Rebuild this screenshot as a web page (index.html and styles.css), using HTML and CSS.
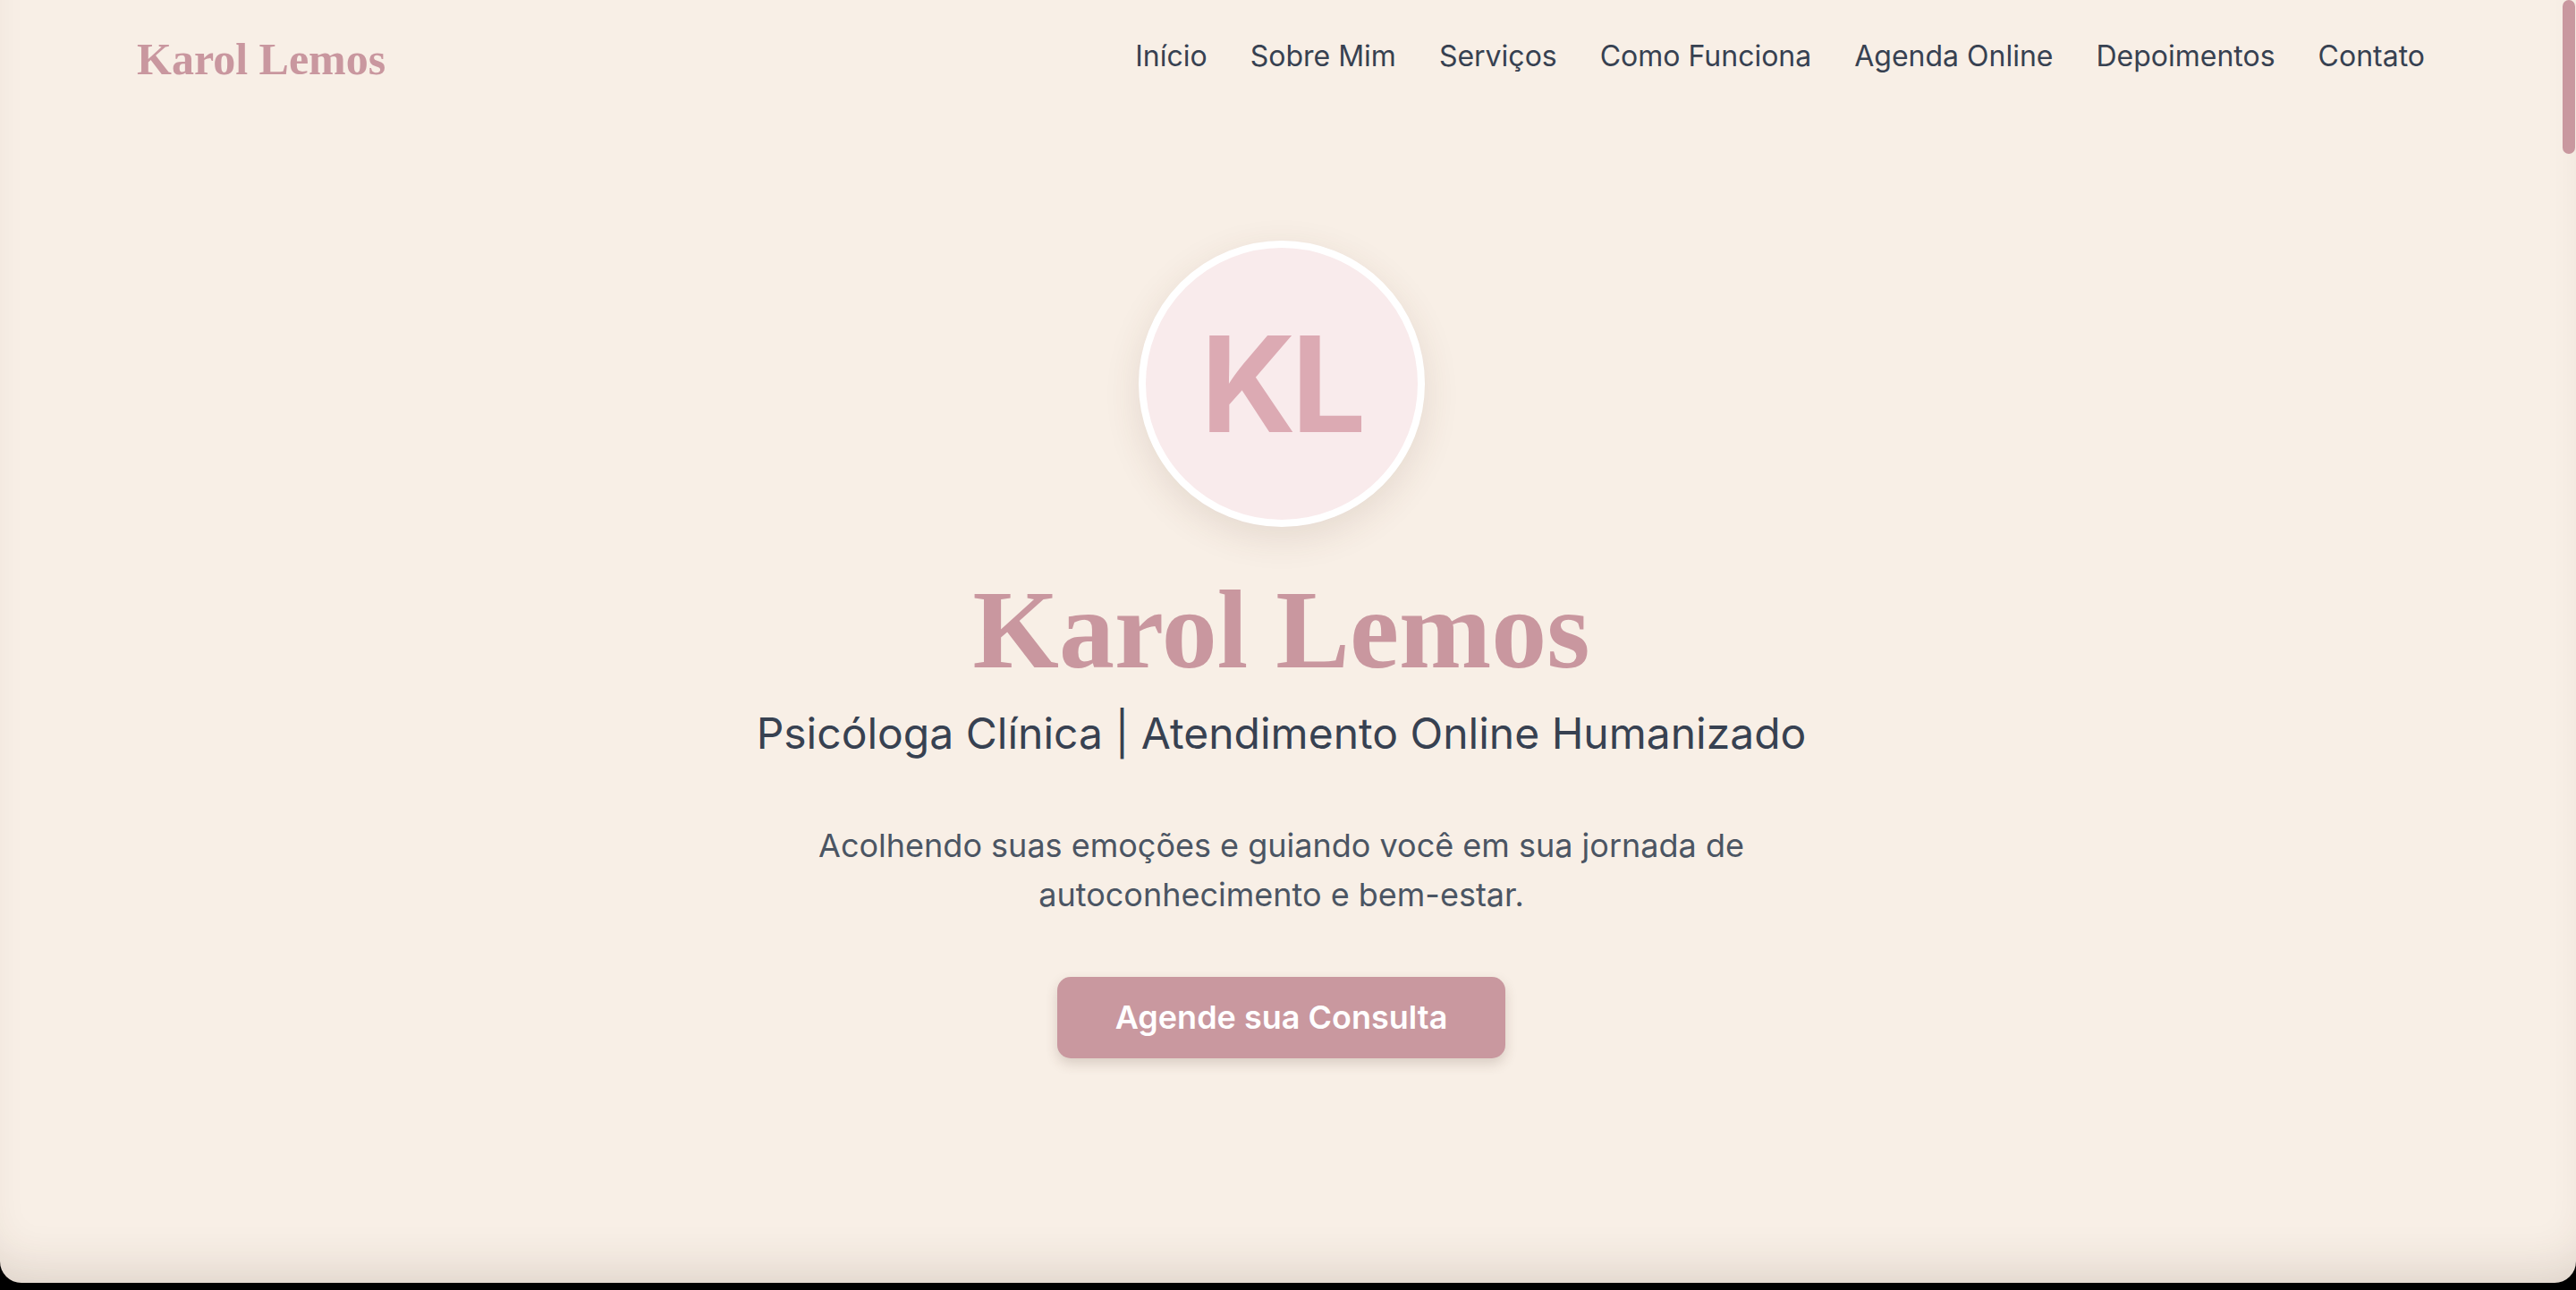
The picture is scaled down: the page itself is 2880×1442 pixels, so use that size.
FILE: index.html
```html
<!DOCTYPE html>
<html lang="pt-BR">
<head>
<meta charset="utf-8">
<title>Karol Lemos | Psicóloga Clínica</title>
<link rel="stylesheet" href="styles.css">
</head>
<body>
<div class="window">
  <div class="page">
    <header class="header">
      <a class="logo" href="#inicio">Karol Lemos</a>
      <nav class="nav">
        <a href="#inicio">Início</a>
        <a href="#sobre">Sobre Mim</a>
        <a href="#servicos">Serviços</a>
        <a href="#como-funciona">Como Funciona</a>
        <a href="#agenda">Agenda Online</a>
        <a href="#depoimentos">Depoimentos</a>
        <a href="#contato">Contato</a>
      </nav>
    </header>
    <main class="hero" id="inicio">
      <div class="avatar"><span>KL</span></div>
      <h1 class="title">Karol Lemos</h1>
      <p class="subtitle">Psicóloga Clínica | Atendimento Online Humanizado</p>
      <p class="lead">Acolhendo suas emoções e guiando você em sua jornada de autoconhecimento e bem-estar.</p>
      <a class="cta" href="#agenda">Agende sua Consulta</a>
    </main>
  </div>
  <div class="scrollbar"><div class="thumb"></div></div>
</div>
</body>
</html>
```
FILE: styles.css
```css
* { box-sizing: border-box; }
html, body { margin: 0; padding: 0; background: #000; }
body { font-family: Inter, "Noto Sans", sans-serif; }

.window {
  height: 1434px;
  display: flex;
  background: #f8efe6;
  border-radius: 0 0 24px 24px;
  overflow: hidden;
  box-shadow: inset 0 -40px 55px -30px rgba(70, 45, 30, 0.16);
}

.page { flex: 1; display: flex; flex-direction: column; }

.header {
  height: 132px;
  padding: 0 154px 0 153px;
  display: flex;
  align-items: center;
  justify-content: space-between;
}

.logo {
  font-family: "Liberation Serif", "Times New Roman", serif;
  font-weight: 700;
  font-size: 50px;
  line-height: 1;
  color: #c9979f;
  text-decoration: none;
}

.nav { display: flex; gap: 48px; padding-bottom: 7px; }
.nav a {
  font-size: 32px;
  line-height: 1;
  color: #374151;
  text-decoration: none;
}

.hero {
  display: flex;
  flex-direction: column;
  align-items: center;
  text-align: center;
  padding-top: 137px;
}

.avatar {
  width: 320px;
  height: 320px;
  border-radius: 50%;
  border: 8px solid #ffffff;
  background: #f9ebec;
  display: flex;
  align-items: center;
  justify-content: center;
  box-shadow: 0 12px 40px rgba(90, 60, 40, 0.12);
}
.avatar span {
  font-weight: 700;
  font-size: 148px;
  line-height: 1;
  color: #dcaab3;
  letter-spacing: -5px;
  margin-top: 2px;
}

.title {
  margin: 48px 0 0;
  font-family: "Liberation Serif", "Times New Roman", serif;
  font-weight: 700;
  font-size: 124px;
  line-height: 1.1;
  color: #c9979f;
}

.subtitle {
  margin: 16px 0 0;
  font-size: 48px;
  line-height: 1.3;
  color: #374151;
}

.lead {
  margin: 66px 0 0;
  max-width: 1100px;
  font-size: 36px;
  line-height: 55px;
  color: #4b5563;
}

.cta {
  margin-top: 64px;
  padding: 26px 65px 27px;
  font-size: 36px;
  line-height: 38px;
  font-weight: 600;
  color: #ffffff;
  background: #c9989f;
  border-radius: 15px;
  text-decoration: none;
  box-shadow: 0 6px 14px rgba(80, 50, 40, 0.18);
}

.scrollbar {
  width: 15px;
  flex: none;
  padding-right: 1px;
}
.thumb {
  height: 172px;
  background: #c9989f;
  border-radius: 8px;
}
```
